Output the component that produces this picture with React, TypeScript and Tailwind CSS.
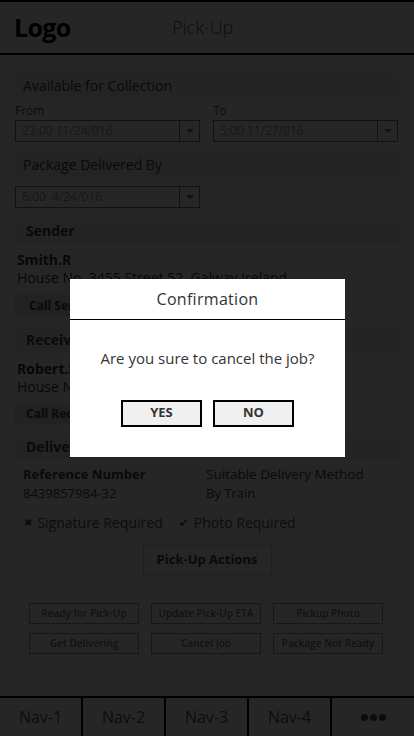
import React from "react";

const FONT = { fontFamily: '"Open Sans", "Noto Sans", sans-serif' };

function SectionHeader({ title, bold }: { title: string; bold?: boolean }) {
  return (
    <div
      className={`h-[25px] bg-[#f0f0f0] flex items-center text-[14px] text-[#444] ${
        bold ? "pl-[11px] font-bold" : "pl-[8px]"
      }`}
    >
      {title}
    </div>
  );
}

function DateSelect({ value }: { value: string }) {
  return (
    <div className="w-[185px] h-[22px] border border-[#7a7a7a] flex">
      <div className="flex-1 flex items-center pl-[6px] text-[12px] text-[#999] whitespace-pre">{value}</div>
      <div className="w-[20px] border-l border-[#7a7a7a] flex items-center justify-center">
        <span className="block w-0 h-0 border-l-[4px] border-r-[4px] border-t-[4px] border-l-transparent border-r-transparent border-t-[#777]" />
      </div>
    </div>
  );
}

const ACTIONS = [
  "Ready for Pick-Up",
  "Update Pick-Up ETA",
  "Pickup Photo",
  "Get Delivering",
  "Cancel Job",
  "Package Not Ready",
];

const NAV = ["Nav-1", "Nav-2", "Nav-3", "Nav-4"];

export default function App() {
  return (
    <div className="relative w-[414px] h-[736px] overflow-hidden bg-white" style={FONT}>
      <div className="h-full flex flex-col border-t-2 border-black">
        {/* header */}
        <header className="h-[53px] shrink-0 border-b-2 border-black flex items-center">
          <div className="w-[172px] pl-[14px] text-[25px] font-bold text-black tracking-tight">Logo</div>
          <div className="text-[18px] font-light text-[#555]">Pick-Up</div>
        </header>

        <main className="flex-1 px-[15px] pt-[18px]">
          <SectionHeader title="Available for Collection" />
          <div className="mt-[6px] grid grid-cols-[185px_185px] gap-x-[13px]">
            <div className="flex flex-col gap-[2px]">
              <span className="text-[12px] leading-[14px] text-[#555]">From</span>
              <DateSelect value="23:00 11/24/016" />
            </div>
            <div className="flex flex-col gap-[2px]">
              <span className="text-[12px] leading-[14px] text-[#555]">To</span>
              <DateSelect value="5:00 11/27/016" />
            </div>
          </div>

          <div className="mt-[10px]">
            <SectionHeader title="Package Delivered By" />
          </div>
          <div className="mt-[9px]">
            <DateSelect value="6:00  4/24/016" />
          </div>

          <div className="mt-[10px]">
            <SectionHeader title="Sender" bold />
          </div>
          <div className="mt-[8px] pl-[2px] text-[14px] leading-[18px] text-[#333]">
            <div className="font-bold">Smith.R</div>
            <div>House No. 3455 Street 52, Galway Ireland</div>
          </div>
          <button className="mt-[8px] h-[22px] px-[14px] bg-[#e2e2e2] text-[12px] font-bold text-[#444]">
            Call Sender
          </button>

          <div className="mt-[10px]">
            <SectionHeader title="Receiver" bold />
          </div>
          <div className="mt-[8px] pl-[2px] text-[14px] leading-[18px] text-[#333]">
            <div className="font-bold">Robert.S</div>
            <div>House No. 1234 Street 12, Dublin Ireland</div>
          </div>
          <button className="mt-[8px] h-[20px] px-[11px] bg-[#e2e2e2] text-[12px] font-bold text-[#444]">
            Call Receiver
          </button>

          <div className="mt-[10px]">
            <SectionHeader title="Delivery Details" bold />
          </div>
          <div className="mt-[6px] px-[8px] grid grid-cols-[183px_1fr] text-[13px] leading-[19px] text-[#444]">
            <div>
              <div className="font-bold">Reference Number</div>
              <div>8439857984-32</div>
            </div>
            <div>
              <div className="text-[13.5px]">Suitable Delivery Method</div>
              <div>By Train</div>
            </div>
          </div>
          <div className="mt-[9px] px-[9px] flex items-center gap-[16px] text-[14px] text-[#555]">
            <span className="flex items-center gap-[5px]">
              <span className="text-[10px]" style={{ fontFamily: '"DejaVu Sans", sans-serif' }}>✖</span>
              Signature Required
            </span>
            <span className="flex items-center gap-[5px]">
              <span className="text-[12px]" style={{ fontFamily: '"DejaVu Sans", sans-serif' }}>✔</span>
              Photo Required
            </span>
          </div>

          <div className="mt-[12px] flex justify-center">
            <button className="w-[129px] h-[30px] border border-[#cfcfcf] bg-[#fafafa] text-[13px] font-bold text-[#444]">
              Pick-Up Actions
            </button>
          </div>

          <div className="mt-[14px] mx-[1px] h-[80px] border border-[#ececec] px-[11px] pt-[13px]">
            <div className="grid grid-cols-[110px_110px_110px] gap-x-[12px] gap-y-[9px] ml-[1px]">
              {ACTIONS.map((a) => (
                <div
                  key={a}
                  className="h-[21px] border border-[#9c9c9c] flex items-center justify-center text-[10px] font-semibold text-[#777]"
                >
                  {a}
                </div>
              ))}
            </div>
          </div>
        </main>

        {/* bottom nav */}
        <nav className="h-[40px] shrink-0 border-t-2 border-black flex">
          {NAV.map((n) => (
            <div
              key={n}
              className="w-[83px] border-r-2 border-black flex items-center justify-center text-[16px] text-[#555]"
            >
              {n}
            </div>
          ))}
          <div className="flex-1 flex items-center justify-center gap-[2px]">
            <span className="w-[7px] h-[7px] rounded-full bg-[#555]" />
            <span className="w-[7px] h-[7px] rounded-full bg-[#555]" />
            <span className="w-[7px] h-[7px] rounded-full bg-[#555]" />
          </div>
        </nav>
      </div>

      {/* dim overlay */}
      <div className="absolute inset-0 bg-black/85" />

      {/* confirmation dialog */}
      <div className="absolute left-[70px] top-[279px] w-[275px] h-[178px] bg-white flex flex-col">
        <div className="h-[41px] border-b-[1.5px] border-black flex items-center justify-center text-[16px] font-medium tracking-[0.3px] text-[#333]">
          Confirmation
        </div>
        <div className="pt-[27px] text-center text-[15px] text-[#333]">Are you sure to cancel the job?</div>
        <div className="mt-[30px] flex justify-center gap-[11px]">
          <button className="w-[81px] h-[27px] border-2 border-black bg-[#f0f0f0] text-[13px] font-bold text-[#333]">
            YES
          </button>
          <button className="w-[81px] h-[27px] border-2 border-black bg-[#f0f0f0] text-[13px] font-bold text-[#333]">
            NO
          </button>
        </div>
      </div>
    </div>
  );
}
